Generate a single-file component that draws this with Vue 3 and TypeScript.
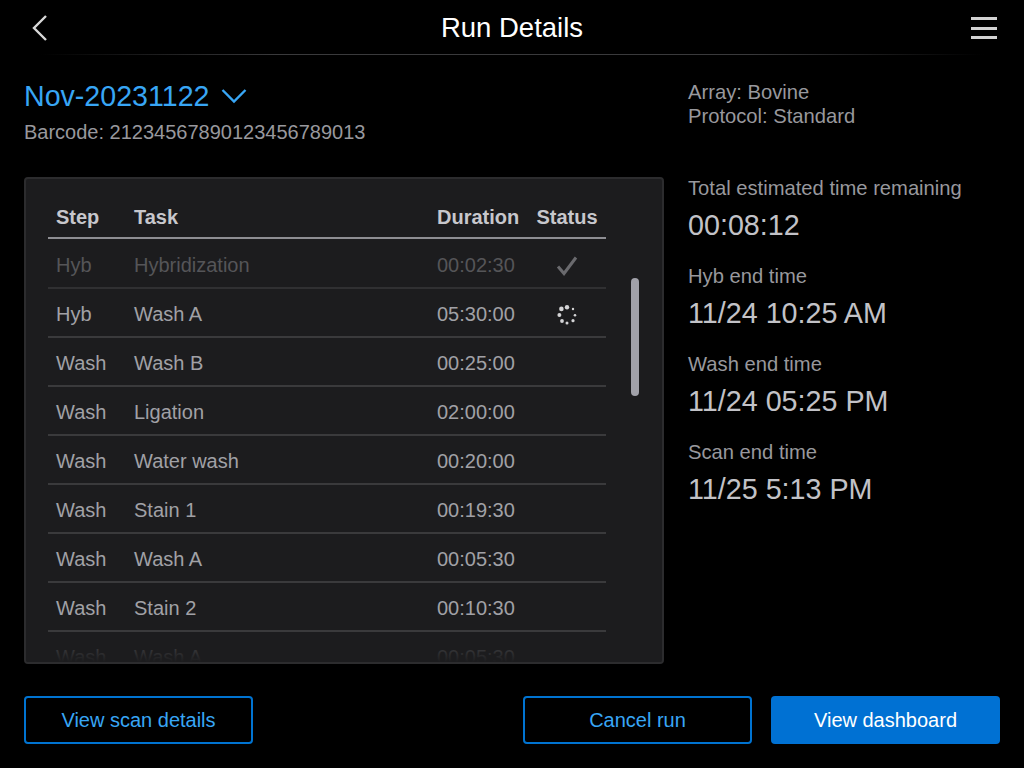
<script setup lang="ts">
interface RunStep {
  step: string
  task: string
  duration: string
  status?: 'done' | 'running'
}

const steps: RunStep[] = [
  { step: 'Hyb', task: 'Hybridization', duration: '00:02:30', status: 'done' },
  { step: 'Hyb', task: 'Wash A', duration: '05:30:00', status: 'running' },
  { step: 'Wash', task: 'Wash B', duration: '00:25:00' },
  { step: 'Wash', task: 'Ligation', duration: '02:00:00' },
  { step: 'Wash', task: 'Water wash', duration: '00:20:00' },
  { step: 'Wash', task: 'Stain 1', duration: '00:19:30' },
  { step: 'Wash', task: 'Wash A', duration: '00:05:30' },
  { step: 'Wash', task: 'Stain 2', duration: '00:10:30' },
  { step: 'Wash', task: 'Wash A', duration: '00:05:30' }
]

const times = [
  { label: 'Total estimated time remaining', value: '00:08:12' },
  { label: 'Hyb end time', value: '11/24 10:25 AM' },
  { label: 'Wash end time', value: '11/24 05:25 PM' },
  { label: 'Scan end time', value: '11/25 5:13 PM' }
]

// spinner dots, biggest at the top left
const dots = [
  { cx: 10, cy: 2.3, r: 2.2 },
  { cx: 16, cy: 4, r: 1.2 },
  { cx: 18, cy: 10.3, r: 1.3 },
  { cx: 16, cy: 15.7, r: 1.6 },
  { cx: 10, cy: 18, r: 1.5 },
  { cx: 5, cy: 16, r: 1.9 },
  { cx: 2.4, cy: 10, r: 2 },
  { cx: 4.4, cy: 3.9, r: 2.3 }
]
</script>

<template>
  <div class="screen">
    <header class="topbar">
      <button class="icon-btn back" aria-label="Back">
        <svg width="18" height="28" viewBox="0 0 18 28">
          <path d="M15 2 L3 14 L15 26" fill="none" stroke="#d8d8d8" stroke-width="2.4" />
        </svg>
      </button>
      <h1 class="title">Run Details</h1>
      <button class="icon-btn" aria-label="Menu">
        <span class="bars"><i></i><i></i><i></i></span>
      </button>
    </header>

    <section class="summary">
      <div class="run">
        <div class="run-name">
          Nov-20231122
          <svg width="26" height="16" viewBox="0 0 26 16">
            <path d="M1.5 2 L13 13.5 L24.5 2" fill="none" stroke="#38a6f5" stroke-width="2.4" />
          </svg>
        </div>
        <div class="barcode">Barcode: 21234567890123456789013</div>
      </div>
      <div class="meta">
        <div>Array: Bovine</div>
        <div>Protocol: Standard</div>
      </div>
    </section>

    <main class="content">
      <div class="panel">
        <div class="table-wrap">
          <div class="row head">
            <span>Step</span>
            <span>Task</span>
            <span>Duration</span>
            <span class="status">Status</span>
          </div>
          <div
            v-for="(s, i) in steps"
            :key="i"
            class="row"
            :class="{ finished: s.status === 'done' }"
          >
            <span>{{ s.step }}</span>
            <span>{{ s.task }}</span>
            <span>{{ s.duration }}</span>
            <span class="status">
              <svg v-if="s.status === 'done'" width="22" height="22" viewBox="0 0 22 22">
                <path d="M2 11.5 L8 18.5 L20 2.5" fill="none" stroke="#6a6a6e" stroke-width="3" />
              </svg>
              <svg v-else-if="s.status === 'running'" width="20" height="20" viewBox="0 0 20 20">
                <circle v-for="(d, n) in dots" :key="n" :cx="d.cx" :cy="d.cy" :r="d.r" fill="#d4d4d6" />
              </svg>
            </span>
          </div>
        </div>
        <div class="scrollbar"></div>
        <div class="fade"></div>
      </div>

      <aside class="times">
        <div v-for="t in times" :key="t.label" class="time">
          <div class="time-label">{{ t.label }}</div>
          <div class="time-value">{{ t.value }}</div>
        </div>
      </aside>
    </main>

    <footer class="actions">
      <button class="btn outline">View scan details</button>
      <div class="actions-right">
        <button class="btn outline">Cancel run</button>
        <button class="btn primary">View dashboard</button>
      </div>
    </footer>
  </div>
</template>

<style>
html, body { margin: 0; background: #000; }
</style>

<style scoped>
.screen {
  width: 1024px;
  height: 768px;
  background: #000;
  color: #aeaeb2;
  font-family: "Liberation Sans", Arial, sans-serif;
  display: flex;
  flex-direction: column;
  overflow: hidden;
}
.topbar {
  height: 55px;
  box-sizing: border-box;
  padding: 1px 27px 0 31px;
  display: flex;
  align-items: center;
  justify-content: space-between;
  position: relative;
}
.topbar::after {
  content: "";
  position: absolute;
  left: 40px;
  right: 40px;
  bottom: 0;
  height: 1px;
  background: linear-gradient(90deg, #000, #3a3a3c 25%, #3a3a3c 75%, #000);
}
.title {
  margin: 0;
  font-size: 27.5px;
  font-weight: 400;
  color: #fff;
}
.icon-btn {
  width: 26px;
  background: none;
  border: none;
  padding: 0;
  display: flex;
}
.icon-btn.back {
  width: 22px;
}
.bars {
  display: flex;
  flex-direction: column;
  gap: 6.5px;
  width: 26px;
}
.bars i {
  height: 3px;
  background: #d2d2d2;
}
.summary {
  height: 122px;
  box-sizing: border-box;
  padding: 25px 24px 0;
  display: flex;
  gap: 24px;
}
.run {
  width: 640px;
}
.run-name {
  display: flex;
  align-items: center;
  gap: 12px;
  font-size: 28.6px;
  line-height: 32px;
  color: #38a6f5;
}
.barcode {
  margin-top: 9px;
  font-size: 20px;
  line-height: 22px;
  color: #98989d;
}
.meta {
  font-size: 20.2px;
  line-height: 24px;
  color: #98989d;
}
.content {
  padding: 0 24px;
  display: flex;
  gap: 24px;
}
.panel {
  position: relative;
  width: 640px;
  height: 487px;
  box-sizing: border-box;
  background: #1c1c1e;
  border: 2px solid #2c2c2e;
  border-radius: 4px;
  padding: 21px 0 0 22px;
  overflow: hidden;
}
.table-wrap {
  width: 558px;
}
.row {
  display: grid;
  grid-template-columns: 78px 303px 97px 1fr;
  align-items: center;
  box-sizing: border-box;
  height: 49px;
  padding: 4px 0 0 8px;
  border-bottom: 2px solid #3a3a3c;
  font-size: 20px;
  color: #a1a1a6;
}
.row.head {
  height: 39px;
  margin-bottom: 1px;
  padding: 0 0 3px 8px;
  border-bottom-color: #8e8e93;
  font-weight: 700;
  color: #c7c7cc;
}
.row.finished {
  color: #555558;
  border-bottom-color: #303032;
}
.status {
  display: flex;
  justify-content: center;
  margin-left: -3px;
  margin-right: 3px;
}
.scrollbar {
  position: absolute;
  left: 605px;
  top: 99px;
  width: 8px;
  height: 118px;
  border-radius: 4px;
  background: #a1a1a9;
}
.fade {
  position: absolute;
  left: 0;
  right: 0;
  bottom: 0;
  height: 30px;
  background: linear-gradient(rgba(28, 28, 30, 0.55), rgba(28, 28, 30, 1));
}
.times {
  display: flex;
  flex-direction: column;
  gap: 20px;
}
.time-label {
  font-size: 20.2px;
  line-height: 22px;
  color: #98989d;
}
.time-value {
  margin-top: 7px;
  margin-bottom: 1px;
  font-size: 28.7px;
  line-height: 38px;
  color: #c2c2c7;
}
.actions {
  margin-top: 32px;
  padding: 0 24px;
  display: flex;
  justify-content: space-between;
}
.actions-right {
  display: flex;
  gap: 19px;
}
.btn {
  width: 229px;
  height: 48px;
  box-sizing: border-box;
  border-radius: 4px;
  font-family: inherit;
  font-size: 20px;
  padding: 0;
}
.btn.outline {
  background: transparent;
  border: 2px solid #0073d1;
  color: #38a6f5;
}
.btn.primary {
  background: #0071d3;
  border: none;
  color: #fff;
}
</style>
